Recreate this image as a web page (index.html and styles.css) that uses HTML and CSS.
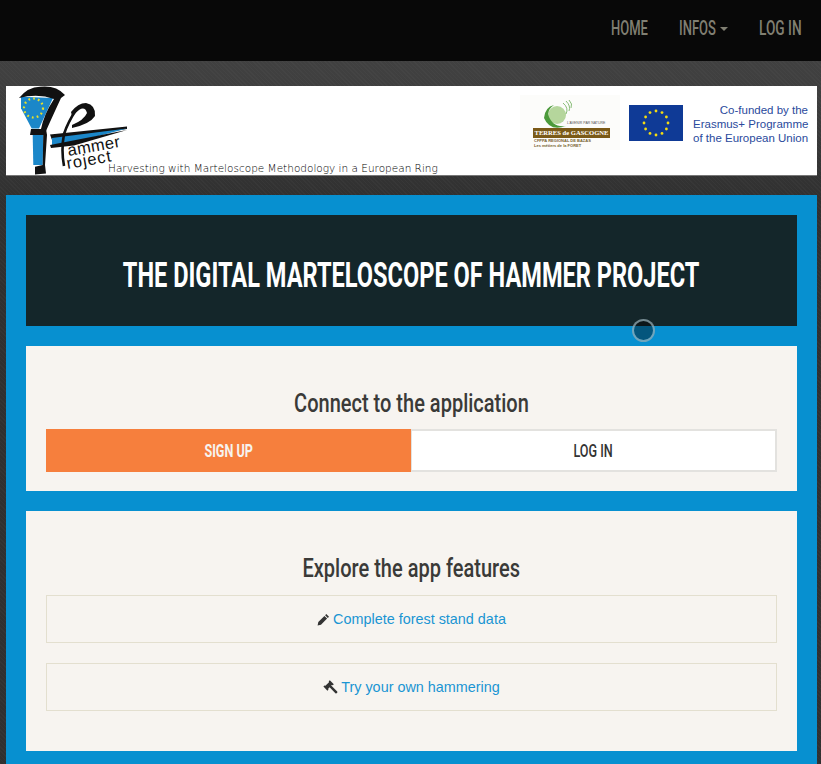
FILE: index.html
```html
<!DOCTYPE html>
<html lang="en">
<head>
<meta charset="utf-8">
<title>Hammer Project</title>
<link rel="stylesheet" href="styles.css">
</head>
<body>
<nav class="navbar">
  <a class="nav-link" href="#"><span class="label label-home">HOME</span></a>
  <a class="nav-link" href="#"><span class="label label-infos">INFOS</span><span class="caret"></span></a>
  <a class="nav-link" href="#"><span class="label label-login">LOG IN</span></a>
</nav>
<header class="banner">
  <div class="logo">
    <svg class="logo-mark" width="125" height="89" viewBox="0 0 125 89">
      <path d="M15 10.7 L47 12 L33 42.5 L25.7 42.5 L15 22.3Z" fill="#1b87c9"/>
      <circle cx="27.5" cy="22" r="9.5" fill="none" stroke="#e8e02a" stroke-width="2.2" stroke-dasharray="1.8 3.1"/>
      <path d="M13 12 Q22 1 34 .8 Q50 -1 59 9 L55 12 Q43 38 40 45 L35 43 Q38 28 48 13 Q32 7 13 12Z" fill="#111"/>
      <path d="M25 43 L40 43 L41 49 L24 49Z" fill="#111"/>
      <path d="M26.7 49 L37.3 49 L36.7 79 L27.3 79Z" fill="#1b87c9"/>
      <path d="M37.3 46 L41 49 L39 79 L40 87.5 L29 88.5 L29 80.7 L36.7 79Z" fill="#111"/>
      <path d="M44 48.5 L121 40.5 L121 43 L46 54Z" fill="#111"/>
      <path d="M46 52 L121 42.5 L66 57 L46 59Z" fill="#1b87c9"/>
      <path d="M44 59 L121 44 L68 59.5 L45 62Z" fill="#111"/>
      <path d="M70 24 Q62 36 58 48 Q55 64 58 80" fill="none" stroke="#111" stroke-width="2.6"/>
      <path d="M65 26 Q72 17 80 17 Q90 19 89 30 Q84 38 66 42 L66 39 Q78 34 81 27 Q79 20 73 24 L66 30Z" fill="#111"/>
    </svg>
    <span class="logo-word logo-word-a">ammer</span>
    <span class="logo-word logo-word-b">roject</span>
    <span class="tagline">Harvesting with Marteloscope Methodology in a European Ring</span>
  </div>
  <div class="partners">
    <div class="gascogne">
      <svg class="leaf" width="36" height="30" viewBox="0 0 36 30">
        <circle cx="17" cy="15" r="9" fill="#b5d69c"/>
        <path d="M4 18 Q10 32 26 26 Q12 28 8 14 Q9 8 14 5 Q5 7 4 18Z" fill="#4b9a3a"/>
        <path d="M23 3 Q29 8 26 14 M26 1 Q31 6 29 11 M29 0 Q33 4 31 8" fill="none" stroke="#6bac55" stroke-width=".8"/>
      </svg>
      <span class="gas-motto">L'AVENIR PAR NATURE</span>
      <span class="gas-bar">TERRES de GASCOGNE</span>
      <span class="gas-small">CFPPA REGIONAL DE BAZAS</span>
      <span class="gas-small">Les métiers de la FORET</span>
    </div>
    <svg class="eu-flag" width="54" height="36" viewBox="0 0 54 36">
      <rect width="54" height="36" fill="#0f3a96"/>
      <g fill="#f5dc10">
        <circle cx="27" cy="6" r="1.4"/><circle cx="33" cy="7.6" r="1.4"/><circle cx="37.4" cy="12" r="1.4"/>
        <circle cx="39" cy="18" r="1.4"/><circle cx="37.4" cy="24" r="1.4"/><circle cx="33" cy="28.4" r="1.4"/>
        <circle cx="27" cy="30" r="1.4"/><circle cx="21" cy="28.4" r="1.4"/><circle cx="16.6" cy="24" r="1.4"/>
        <circle cx="15" cy="18" r="1.4"/><circle cx="16.6" cy="12" r="1.4"/><circle cx="21" cy="7.6" r="1.4"/>
      </g>
    </svg>
    <p class="cofund">Co-funded by the<br>Erasmus+ Programme<br>of the European Union</p>
  </div>
</header>
<main class="main">
  <section class="title-card"><h1>THE DIGITAL MARTELOSCOPE OF HAMMER PROJECT</h1></section>
  <section class="card connect">
    <h2><span class="heading-text">Connect to the application</span></h2>
    <div class="btn-row">
      <a class="btn btn-orange" href="#"><span class="btn-text">SIGN UP</span></a>
      <a class="btn btn-white" href="#"><span class="btn-text">LOG IN</span></a>
    </div>
  </section>
  <section class="card explore">
    <h2><span class="heading-text">Explore the app features</span></h2>
    <a class="feature" href="#">
      <svg class="icon" width="13" height="13" viewBox="0 0 13 13"><path d="M9.3 1 L12 3.7 L10.8 4.9 L8.1 2.2Z M7.4 2.9 L10.1 5.6 L4 11.7 L0.6 12.4 L1.3 9Z" fill="#333"/></svg>
      <span>Complete forest stand data</span>
    </a>
    <a class="feature" href="#">
      <svg class="icon" width="15" height="15" viewBox="0 0 15 15"><path d="M0.4 6.6 L1.4 5.6 L2.4 5.8 L6 2.2 L5.8 1.2 L6.8 0.2 L10.8 4.2 L9.8 5.2 L8.8 5 L8.2 5.6 L14.2 11.4 Q14.8 12.2 14 13 Q13.2 13.8 12.4 13.2 L6.6 7.2 L5.2 8.8 L5.4 9.8 L4.4 10.8Z" fill="#333"/></svg>
      <span>Try your own hammering</span>
    </a>
  </section>
  <div class="ripple"></div>
</main>
</body>
</html>
```
FILE: styles.css
```css
* { box-sizing: border-box; }
html, body { margin: 0; padding: 0; }
body {
  width: 821px;
  height: 764px;
  overflow: hidden;
  position: relative;
  background-color: #3a3a3a;
  background-image:
    repeating-linear-gradient(45deg, rgba(255,255,255,.025) 0 1px, transparent 1px 3px),
    linear-gradient(#444 0, #3f3f3f 90px, #303030 200px);
  font-family: "Liberation Sans", Arial, sans-serif;
}
.navbar {
  height: 61px;
  background: #080808;
  display: flex;
  justify-content: flex-end;
  align-items: center;
  gap: 31px;
  padding: 0 19px 6px 0;
}
.nav-link {
  font-family: Roboto, sans-serif;
  font-size: 21px;
  font-weight: 500;
  color: #807f72;
  text-decoration: none;
  display: flex;
  align-items: center;
}
.label {
  display: block;
  white-space: nowrap;
  transform: scaleX(.62);
  transform-origin: left center;
}
.label-home { width: 37px; }
.label-infos { width: 38px; }
.label-login { width: 43px; transform: scaleX(.65); }
.caret {
  width: 0; height: 0; margin-left: 3px; margin-top: 2px;
  border-left: 4px solid transparent;
  border-right: 4px solid transparent;
  border-top: 4px solid #807f72;
}
.banner {
  height: 90px;
  margin: 25px 4px 19px 6px;
  background: #fff;
  display: flex;
  justify-content: space-between;
  border-bottom: 1px solid #777;
}
.logo { position: relative; width: 440px; }
.logo-mark { position: absolute; left: 0; top: 0; overflow: visible; }
.logo-word {
  position: absolute;
  font-size: 16.5px;
  letter-spacing: .4px;
  line-height: 18px;
  color: #111;
  transform-origin: left bottom;
  transform: rotate(-10deg);
}
.logo-word-a { left: 63px; top: 55px; }
.logo-word-b { left: 62px; top: 68px; letter-spacing: .9px; }
.tagline {
  position: absolute; left: 102px; top: 76px;
  font-family: "DejaVu Sans", sans-serif;
  font-size: 10.5px;
  font-weight: 200;
  color: #000;
  white-space: nowrap;
}
.partners { display: flex; align-items: flex-start; padding-top: 17px; padding-right: 9px; }
.gascogne {
  width: 100px;
  height: 55px;
  margin: -8px 9px 0 0;
  background: #fcfcfa;
  display: flex;
  flex-direction: column;
  position: relative;
}
.leaf { position: absolute; left: 20px; top: 5px; }
.gas-motto { position: absolute; left: 47px; top: 26px; font-size: 3.5px; white-space: nowrap; color: #555; }
.gas-bar {
  position: absolute; left: 13px; top: 33px;
  width: 77px; height: 10px;
  background: #7b5a17; color: #fff;
  font-family: "Liberation Serif", serif;
  font-size: 6.6px; font-weight: 700; line-height: 10px;
  text-align: center; white-space: nowrap;
}
.gas-small { position: relative; top: 44px; left: 14px; font-size: 4px; font-weight: 700; line-height: 4.5px; color: #77622e; white-space: nowrap; }
.eu-flag { margin-top: 2px; margin-right: 10px; flex: none; }
.cofund { margin: 0; width: 115px; font-size: 11.5px; line-height: 14px; color: #2a4a9c; text-align: right; white-space: nowrap; }
.main {
  position: relative;
  margin: 0 4px 0 6px;
  height: 569px;
  background: #0790d0;
  padding: 20px;
  display: flex;
  flex-direction: column;
  gap: 20px;
}
.title-card {
  flex: none;
  height: 111px;
  padding-top: 10px;
  background: #14262a;
  display: flex;
  align-items: center;
  justify-content: center;
}
h1 {
  flex: none;
  margin: 0;
  font-family: Roboto, sans-serif;
  font-size: 35px;
  font-weight: 700;
  color: #fff;
  white-space: nowrap;
  transform: scaleX(.6735);
}
.card { flex: none; background: #f7f4f0; padding: 41px 20px 20px; }
.connect { height: 145px; }
.explore { height: 240px; padding-top: 41px; }
h2 {
  margin: 0;
  font-family: Roboto, sans-serif;
  font-size: 26px;
  line-height: 32px;
  font-weight: 500;
  color: #3a3a38;
  text-align: center;
}
.connect h2 { height: 42px; }
.explore h2 { height: 43px; }
.heading-text { display: inline-block; white-space: nowrap; transform: scaleX(.77); }
.btn-row { display: flex; }
.btn {
  height: 43px;
  display: flex;
  align-items: center;
  justify-content: center;
  font-family: Roboto, sans-serif;
  font-size: 18px;
  font-weight: 500;
  text-decoration: none;
}
.btn-text { display: inline-block; white-space: nowrap; transform: scaleX(.7); }
.btn-orange { flex: none; width: 365px; background: #f67f3d; color: #f6f3ef; font-weight: 700; }
.btn-white { flex: 1; background: #fff; color: #333; border: 2px solid #e3e2df; border-left-width: 1px; }
.feature {
  height: 48px;
  margin-bottom: 20px;
  border: 1px solid #e3dfcf;
  display: flex;
  align-items: center;
  justify-content: center;
  gap: 3px;
  font-size: 14.4px;
  color: #1a95d3;
  text-decoration: none;
}
.icon { flex: none; }
.ripple {
  position: absolute;
  left: 626px;
  top: 124px;
  width: 23px;
  height: 23px;
  border-radius: 50%;
  background: rgba(0,0,0,.4);
  border: 2px solid rgba(200,230,240,.55);
}
```
